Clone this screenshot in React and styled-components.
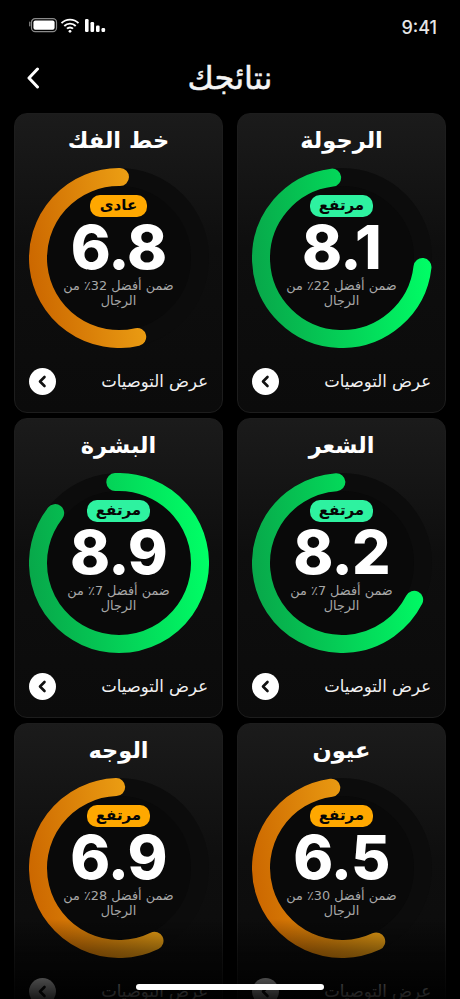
import React from "react";
import styled, { createGlobalStyle } from "styled-components";

const Global = createGlobalStyle`
  html, body { margin: 0; padding: 0; background: #000; }
  body { width: 460px; height: 999px; overflow: hidden; font-family: "DejaVu Sans", "Noto Sans", sans-serif; }
`;

const Screen = styled.div`
  position: relative;
  width: 460px;
  height: 999px;
  overflow: hidden;
  background: #000;
  direction: rtl;
  color: #fff;
`;
const StatusBar = styled.div`
  height: 54px;
  box-sizing: border-box;
  padding: 0 23px 0 29px;
  display: flex;
  align-items: center;
  justify-content: space-between;
`;
const Clock = styled.span`
  font-family: Inter, "Liberation Sans", sans-serif;
  font-size: 18px;
  font-weight: 500;
  color: #e6e6e6;
  direction: ltr;
`;
const Indicators = styled.div`
  display: flex;
  direction: ltr;
  align-items: center;
  margin-top: -3px;
`;
const Header = styled.header`
  position: relative;
  height: 48px;
  display: flex;
  align-items: center;
  justify-content: center;
`;
const HeaderTitle = styled.h1`
  margin: 0;
  font-size: 32px;
  line-height: 40px;
  font-weight: 400;
  -webkit-text-stroke: 0.5px #f4f4f4;
  color: #f4f4f4;
`;
const BackButton = styled.button`
  position: absolute;
  left: 21px;
  top: 9px;
  width: 24px;
  height: 30px;
  padding: 0;
  border: 0;
  background: none;
  display: flex;
  align-items: center;
  justify-content: center;
`;
const Grid = styled.main`
  padding: 11px 14px 0;
  display: grid;
  grid-template-columns: 209px 209px;
  justify-content: space-between;
  row-gap: 5.5px;
`;
const Card = styled.section`
  box-sizing: border-box;
  height: 299.5px;
  padding: 10px 14px 0;
  border: 1px solid #1d1d1d;
  border-radius: 13px;
  background: linear-gradient(180deg, #1b1b1b 0%, #0e0e0e 45%, #0b0b0b 100%);
  display: flex;
  flex-direction: column;
  align-items: center;
`;
const Title = styled.h2`
  margin: 0 0 12px;
  height: 32px;
  font-size: 22.5px;
  line-height: 32px;
  font-weight: 700;
  color: #fff;
  white-space: nowrap;
`;
const Ring = styled.div`
  display: grid;
  width: 180px;
  height: 180px;
  flex: none;
  & > * { grid-area: 1 / 1; }
`;
const RingBody = styled.div`
  display: flex;
  flex-direction: column;
  align-items: center;
  padding-top: 27px;
`;
const Badge = styled.span`
  height: 22px;
  line-height: 21px;
  padding: 0 ${(p) => (p.$wide ? 8.5 : 10)}px;
  border-radius: 10px;
  font-size: 15px;
  font-weight: 700;
  color: #060606;
  background: ${(p) => p.$bg};
`;
const Score = styled.div`
  margin-top: 4px;
  font-family: Inter, "Liberation Sans", sans-serif;
  font-size: 60.5px;
  line-height: 52px;
  font-weight: 800;
  letter-spacing: -0.8px;
  direction: ltr;
  color: #fff;
`;
const Sub = styled.p`
  margin: 5px 0 0;
  width: 124px;
  font-size: 12.8px;
  line-height: 15px;
  text-align: center;
  color: #a8a8a8;
`;
const Footer = styled.div`
  margin-top: 20px;
  width: 100%;
  display: flex;
  align-items: center;
  justify-content: space-between;
`;
const FooterText = styled.span`
  font-size: 16.5px;
  color: #f2f2f2;
`;
const RoundButton = styled.span`
  width: 27px;
  height: 27px;
  border-radius: 50%;
  background: #fff;
  display: flex;
  align-items: center;
  justify-content: center;
`;
const Fade = styled.div`
  position: absolute;
  left: 0;
  right: 0;
  bottom: 0;
  height: 80px;
  background: linear-gradient(180deg, rgba(0,0,0,0) 0%, rgba(0,0,0,0.45) 40%, rgba(0,0,0,0.9) 100%);
`;
const HomeBar = styled.div`
  position: absolute;
  left: 136px;
  bottom: 9px;
  width: 188px;
  height: 6px;
  border-radius: 3px;
  background: #fff;
`;

const pt = (deg, r = 81) => {
  const a = (deg * Math.PI) / 180;
  return [90 + r * Math.cos(a), 90 + r * Math.sin(a)];
};

function Arc({ id, from, to, tone }) {
  const [x1, y1] = pt(from);
  const [x2, y2] = pt(to);
  const span = ((to - from) % 360 + 360) % 360;
  const d = `M${x1} ${y1}A81 81 0 ${span > 180 ? 1 : 0} 1 ${x2} ${y2}`;
  return (
    <svg width="180" height="180" viewBox="0 0 180 180">
      <defs>
        <linearGradient id={id} gradientUnits="userSpaceOnUse" x1="0" y1="90" x2={tone.reach} y2="70">
          <stop offset="0" stopColor={tone.arc[0]} />
          <stop offset="1" stopColor={tone.arc[1]} />
        </linearGradient>
      </defs>
      <circle cx="90" cy="90" r="81" fill="#090909" stroke="#0c0c0c" strokeWidth="18" />
      <path d={d} fill="none" stroke={`url(#${id})`} strokeWidth="18" strokeLinecap="round" />
    </svg>
  );
}

const GREEN = { arc: ["#08a84a", "#00ff66"], badge: "#2ef2a0", reach: 178 };
const ORANGE = { arc: ["#cc6800", "#f2a917"], badge: "#ffa800", reach: 130 };

const items = [
  { title: "الرجولة", score: "8.1", tag: "مرتفع", pct: "22", from: 6.4, to: 263, tone: GREEN },
  { title: "خط الفك", score: "6.8", tag: "عادى", pct: "32", from: 77, to: 270.7, tone: ORANGE },
  { title: "الشعر", score: "8.2", tag: "مرتفع", pct: "7", from: 27, to: 266, tone: GREEN },
  { title: "البشرة", score: "8.9", tag: "مرتفع", pct: "7", from: 267.4, to: 218, tone: GREEN },
  { title: "عيون", score: "6.5", tag: "مرتفع", pct: "30", from: 65, to: 262.4, tone: ORANGE },
  { title: "الوجه", score: "6.9", tag: "مرتفع", pct: "28", from: 64, to: 268, tone: ORANGE },
];

export default function App() {
  return (
    <Screen>
      <Global />
      <StatusBar>
        <Clock>9:41</Clock>
        <Indicators>
          <svg width="78" height="16" viewBox="0 0 78 16">
            <rect x="0" y="3.5" width="1.4" height="5" rx="0.7" fill="#777" />
            <rect x="2.5" y="0.7" width="25" height="13" rx="3.6" fill="none" stroke="#8a8a8a" strokeWidth="1.2" />
            <rect x="4.4" y="2.6" width="21.2" height="9.2" rx="2" fill="#fff" />
            <path d="M32.5 5.2a12 12 0 0 1 17 0M35.3 8a8 8 0 0 1 11.4 0M38 10.7a4.2 4.2 0 0 1 6 0" fill="none" stroke="#fff" strokeWidth="1.9" />
            <circle cx="41" cy="13.3" r="1.4" fill="#fff" />
            <rect x="56" y="1" width="3.6" height="13" rx="1.2" fill="#fff" />
            <rect x="61.5" y="4" width="3.6" height="10" rx="1.2" fill="#fff" />
            <rect x="67" y="7.5" width="3.6" height="6.5" rx="1.2" fill="#fff" />
            <rect x="72.5" y="10" width="3.6" height="4" rx="1.2" fill="#fff" />
          </svg>
        </Indicators>
      </StatusBar>
      <Header>
        <HeaderTitle>نتائجك</HeaderTitle>
        <BackButton aria-label="رجوع">
          <svg width="14" height="22" viewBox="0 0 14 22">
            <path d="M11.5 2 3 11l8.5 9" fill="none" stroke="#fff" strokeWidth="3" strokeLinecap="round" strokeLinejoin="round" />
          </svg>
        </BackButton>
      </Header>
      <Grid>
        {items.map((it, i) => (
          <Card key={it.title}>
            <Title>{it.title}</Title>
            <Ring>
              <Arc id={`arc${i}`} from={it.from} to={it.to} tone={it.tone} />
              <RingBody>
                <Badge $bg={it.tone.badge} $wide={it.tag === "مرتفع"}>{it.tag}</Badge>
                <Score>{it.score}</Score>
                <Sub>ضمن أفضل {it.pct}٪ من الرجال</Sub>
              </RingBody>
            </Ring>
            <Footer>
              <FooterText>عرض التوصيات</FooterText>
              <RoundButton>
                <svg width="11" height="13" viewBox="0 0 11 13">
                  <path d="M7.5 2 3 6.5 7.5 11" fill="none" stroke="#111" strokeWidth="2.6" strokeLinecap="round" strokeLinejoin="round" />
                </svg>
              </RoundButton>
            </Footer>
          </Card>
        ))}
      </Grid>
      <Fade />
      <HomeBar />
    </Screen>
  );
}
